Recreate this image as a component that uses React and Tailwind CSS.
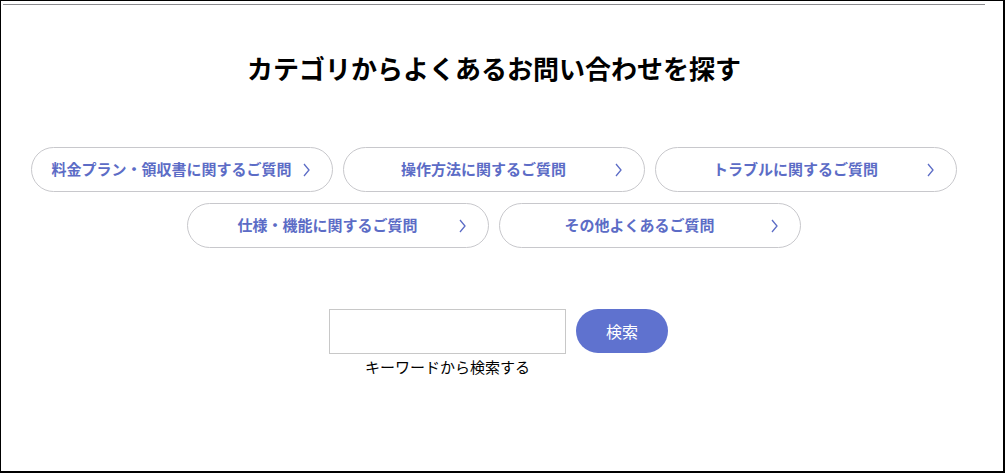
const categories = [
  ["料金プラン・領収書に関するご質問", "操作方法に関するご質問", "トラブルに関するご質問"],
  ["仕様・機能に関するご質問", "その他よくあるご質問"],
];

function CategoryButton({ label }) {
  return (
    <a
      href="#"
      className="relative flex h-[45px] w-[302px] items-center justify-center whitespace-nowrap rounded-full border border-[#c8c8cc] bg-white pl-[10px] pr-[31px] text-[15px] font-bold text-[#5c6cc6]"
    >
      <span>{label}</span>
      <svg
        className="absolute right-[22px] top-1/2 -translate-y-1/2"
        width="7"
        height="14"
        viewBox="0 0 7 14"
        fill="none"
      >
        <path d="M1 1l5 6-5 6" stroke="#5c6cc6" strokeWidth="1.3" />
      </svg>
    </a>
  );
}

export default function App() {
  return (
    <div
      className="h-[473px] w-[1005px] border-t border-l border-r-2 border-b-2 border-black bg-white"
      style={{ fontFamily: '"Noto Sans CJK JP", "Noto Sans", sans-serif' }}
    >
      <div className="ml-[2px] mt-[3px] h-px w-[982px] bg-[#8a8a8e]" />
      <div className="flex w-[986px] flex-col items-center">
        <h2 className="mt-[44px] text-[26px] font-bold leading-[38px] text-black">
          カテゴリからよくあるお問い合わせを探す
        </h2>
        <div className="mt-[60px] flex flex-col items-center gap-[11px]">
          {categories.map((row, i) => (
            <div key={i} className="flex gap-[10px]">
              {row.map((label) => (
                <CategoryButton key={label} label={label} />
              ))}
            </div>
          ))}
        </div>
        <div className="ml-[9px] mt-[61px] flex items-start gap-[10px]">
          <div className="flex flex-col items-center">
            <input
              type="text"
              className="h-[45px] w-[237px] border border-[#c8c8c8] px-2 outline-none"
            />
            <span className="mt-[1px] text-[15px] leading-[24px] text-black">
              キーワードから検索する
            </span>
          </div>
          <button className="h-[44px] w-[92px] rounded-full bg-[#5f72cf] text-[16px] text-white">
            検索
          </button>
        </div>
      </div>
    </div>
  );
}
